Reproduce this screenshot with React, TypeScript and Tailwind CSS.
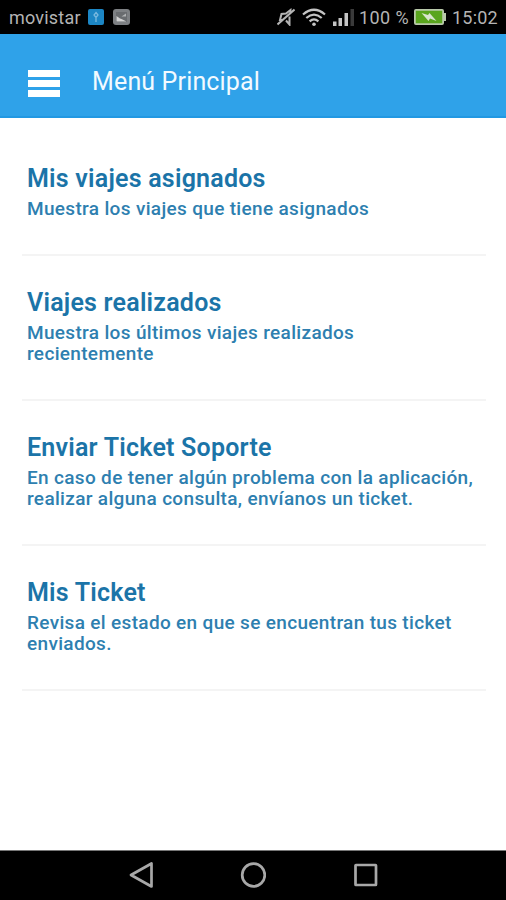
import type React from "react"

interface MenuEntry {
  title: string
  description: string
}

const entries: MenuEntry[] = [
  {
    title: "Mis viajes asignados",
    description: "Muestra los viajes que tiene asignados",
  },
  {
    title: "Viajes realizados",
    description: "Muestra los últimos viajes realizados recientemente",
  },
  {
    title: "Enviar Ticket Soporte",
    description:
      "En caso de tener algún problema con la aplicación, realizar alguna consulta, envíanos un ticket.",
  },
  {
    title: "Mis Ticket",
    description: "Revisa el estado en que se encuentran tus ticket enviados.",
  },
]

function StatusBar() {
  return (
    <div className="h-[34px] shrink-0 bg-black flex items-center pl-[9px] pr-2 text-[#b4b4b4] text-[18px] leading-none whitespace-nowrap">
      <span className="w-[79px] mt-0.5 tracking-[0.2px]">movistar</span>
      <svg className="w-4 h-4" viewBox="0 0 16 16">
        <rect width="16" height="16" rx="2" fill="#1c86c4" />
        <path d="M8 13V7M8 3.5l2 2.5-2 2.5L6 6z" fill="none" stroke="#79b9df" strokeWidth="1.3" />
      </svg>
      <svg className="w-[17px] h-4 ml-[9px]" viewBox="0 0 17 16">
        <rect width="17" height="16" rx="3" fill="#7d8083" />
        <rect x="3" y="3" width="11" height="10" fill="#696c6f" />
        <path d="M3.5 12.5V7L7 9.5l1.5 0.5L13.5 12.5z" fill="#d2d2d2" />
        <path d="M8.5 7.5l4.5-3v3z" fill="#b0b2b4" />
      </svg>

      <div className="ml-auto flex items-center">
        <svg className="w-[18px] h-[18px]" viewBox="0 0 18 18" fill="none" stroke="#b4b4b4" strokeWidth="2">
          <path d="M13.5 5V2L9 5.5 4.5 6 3 12h3M9 12.5l3.5 4V8.5" />
          <path d="M0.5 16.5L17.5 1.5" />
        </svg>
        <svg className="w-6 h-[19px] ml-[7px]" viewBox="0 0 24 19" fill="none" stroke="#c4c4c4" strokeWidth="2.2">
          <path d="M1 6.5Q12-3 23 6.5M4.3 10Q12 3.2 19.7 10M7.6 13.3Q12 9.5 16.4 13.3" />
          <circle cx="12" cy="16.3" r="1.8" fill="#c4c4c4" stroke="none" />
        </svg>
        <svg className="w-[21px] h-[18px] ml-[7px]" viewBox="0 0 21 18" fill="#c4c4c4">
          <path d="M0 13.5h3.5V18H0zM5.5 10H9v8H5.5zM11.5 5H15v13h-3.5z" />
          <path d="M17.5 1H21v17h-3.5z" fill="#3a3a3a" />
        </svg>
        <span className="w-[53px] mt-0.5 ml-[5px] tracking-[0.4px]">100 %</span>
        <svg className="w-8 h-4 ml-0.5" viewBox="0 0 32 16">
          <rect x="0.9" y="0.9" width="28.2" height="14.2" rx="1" fill="#59a51d" stroke="#b9c9aa" strokeWidth="1.8" />
          <path d="M30 4h2v8h-2z" fill="#b9c9aa" />
          <path d="M7.5 4l6.5 2 1.5-2 7 8-6.5-2.5L14.5 12z" fill="#d9e5cf" />
        </svg>
        <span className="ml-[6px] mt-0.5 w-[46px] tracking-[0.2px]">15:02</span>
      </div>
    </div>
  )
}

function Header() {
  return (
    <header className="h-[84px] shrink-0 bg-[#2fa2e9] border-b-2 border-[#2298e2] flex items-center pl-7">
      <div className="w-8 mt-[17px] flex flex-col gap-[3px]">
        <div className="h-[7px] bg-white" />
        <div className="h-[7px] bg-white" />
        <div className="h-[7px] bg-white" />
      </div>
      <h1 className="ml-8 mt-[13px] text-[25px] leading-[30px] tracking-[0.15px] text-[#f2faff] whitespace-nowrap">
        Menú Principal
      </h1>
    </header>
  )
}

function MenuRow({ title, description }: MenuEntry) {
  return (
    <div className="pt-[31px] pb-[35px] pl-[5px] border-b-2 border-[#f4f4f4]">
      <h2 className="text-[25px] leading-[32px] font-semibold tracking-[0.22px] text-[#1b74a8] whitespace-nowrap">
        {title}
      </h2>
      <p className="mt-[3px] pr-2 text-[19px] leading-[21px] font-medium tracking-[0.33px] text-[#2e7fb0]">
        {description}
      </p>
    </div>
  )
}

function NavBar() {
  const icons: { name: string; shape: React.ReactNode }[] = [
    { name: "back", shape: <path d="M3 13L23.5 1.5v23z" /> },
    { name: "home", shape: <circle cx="13.5" cy="13" r="11.3" /> },
    { name: "recent", shape: <rect x="3.5" y="3" width="20.5" height="20" rx="0.5" /> },
  ]
  return (
    <nav className="h-[50px] shrink-0 bg-black border-t border-[#777] flex justify-center gap-[86px]">
      {icons.map((icon) => (
        <svg
          key={icon.name}
          className="w-[26px] h-[26px] mt-[11px]"
          viewBox="0 0 26 26"
          fill="none"
          stroke="#a8a8a8"
          strokeWidth="2.7"
          strokeLinejoin="round"
        >
          {icon.shape}
        </svg>
      ))}
    </nav>
  )
}

export default function App() {
  return (
    <div className="w-[506px] h-[900px] flex flex-col bg-white overflow-hidden font-[Roboto,sans-serif]">
      <StatusBar />
      <Header />
      <main className="grow pl-[22px] pr-5 pt-[14px]">
        {entries.map((entry) => (
          <MenuRow key={entry.title} {...entry} />
        ))}
      </main>
      <NavBar />
    </div>
  )
}
